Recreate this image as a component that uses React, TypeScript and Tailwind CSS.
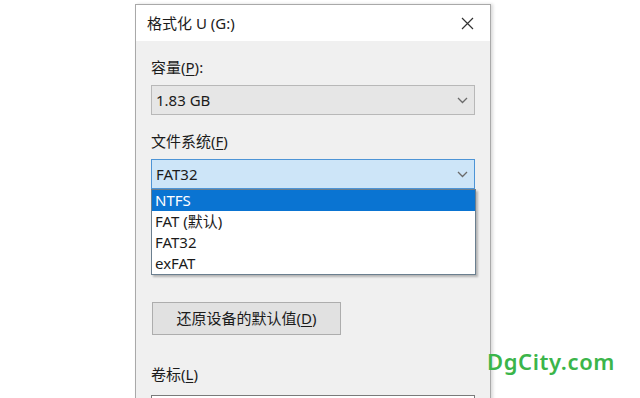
import { useState } from "react";

const FONT = { fontFamily: '"Noto Sans", "Noto Sans CJK SC", sans-serif' };

function Chevron() {
  return (
    <svg width="11" height="7" viewBox="0 0 11 7" className="shrink-0">
      <path d="M1 1 L5.5 5.5 L10 1" fill="none" stroke="#6b6b6b" strokeWidth="1.3" />
    </svg>
  );
}

function Label({ text, hotkey, colon }: { text: string; hotkey: string; colon?: boolean }) {
  return (
    <div className="text-[15px] leading-5 text-[#1b1b1b]">
      {text}(<span className="underline underline-offset-2">{hotkey}</span>){colon ? ":" : ""}
    </div>
  );
}

export default function App() {
  const [fs] = useState("FAT32");
  const options = ["NTFS", "FAT (默认)", "FAT32", "exFAT"];

  return (
    <div className="relative w-[640px] h-[398px] overflow-hidden bg-white" style={FONT}>
      <div className="ml-[135px] mt-[4px] w-[356px] h-[420px] border border-[#a9a9a9] bg-[#f0f0f0] shadow-[2px_0_3px_rgba(0,0,0,0.15)]">
        {/* title bar */}
        <div className="h-[36px] bg-white flex items-center justify-between pl-[11px] pr-[16px]">
          <span className="text-[15px] text-[#1b1b1b]">格式化 U (G:)</span>
          <svg width="13" height="13" viewBox="0 0 13 13">
            <path d="M1 1 L12 12 M12 1 L1 12" stroke="#333" strokeWidth="1.2" />
          </svg>
        </div>

        <div className="pl-[15px] pr-[15px] pt-[16px] flex flex-col">
          <Label text="容量" hotkey="P" colon />
          <div className="mt-[8px] h-[30px] border border-[#b8b8b8] bg-[#e6e6e6] flex items-center justify-between pl-[4px] pr-[6px]">
            <span className="text-[15px] text-[#1b1b1b]">1.83 GB</span>
            <Chevron />
          </div>

          <div className="mt-[16px]">
            <Label text="文件系统" hotkey="F" />
          </div>
          <div className="relative mt-[8px]">
            <div className="h-[30px] border border-[#4d94d6] bg-[#cde5f8] flex items-center justify-between pl-[4px] pr-[6px]">
              <span className="text-[15px] text-[#1b1b1b]">{fs}</span>
              <Chevron />
            </div>
            {/* open list */}
            <div className="absolute left-0 top-[30px] w-[325px] z-10 border border-[#6b7f8f] bg-white shadow-[2px_2px_2px_rgba(0,0,0,0.25)]">
              {options.map((o, i) => (
                <div
                  key={o}
                  className={`h-[21px] leading-[21px] pl-[3px] text-[15px] ${
                    i === 0 ? "bg-[#0a74d2] text-white" : "text-[#1b1b1b]"
                  }`}
                >
                  {o}
                </div>
              ))}
            </div>
          </div>

          {/* covered by the open list */}
          <div className="h-[113px]" />

          <button className="ml-[1px] w-[189px] h-[33px] border border-[#adadad] bg-[#e1e1e1] text-[15px] text-[#1b1b1b]">
            还原设备的默认值(<span className="underline underline-offset-2">D</span>)
          </button>

          <div className="mt-[29px]">
            <Label text="卷标" hotkey="L" />
          </div>
          <div className="mt-[11px] h-[30px] border border-[#7a7a7a] bg-white" />
        </div>
      </div>

      <div className="absolute left-[487px] top-[345px] text-[22px] font-semibold text-[#3bb54a] tracking-[0.6px]">
        DgCity.com
      </div>
    </div>
  );
}
